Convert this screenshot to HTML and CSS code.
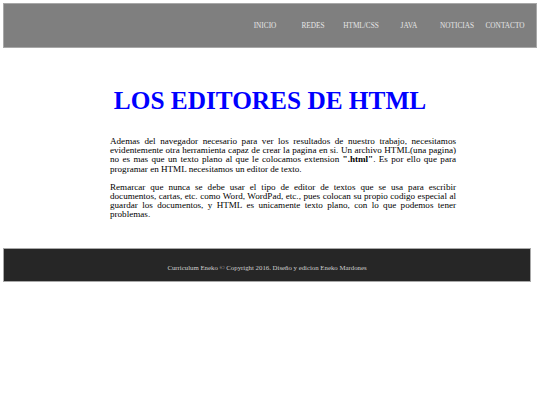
FILE: index.html
```html
<!DOCTYPE html>
<html lang="es">
<head>
<meta charset="utf-8">
<title>Los editores de HTML</title>
<link rel="stylesheet" href="styles.css">
</head>
<body>
<header class="site-header">
  <nav class="nav">
    <a class="nav-item" href="#">INICIO</a>
    <a class="nav-item" href="#">REDES</a>
    <a class="nav-item" href="#">HTML/CSS</a>
    <a class="nav-item" href="#">JAVA</a>
    <a class="nav-item" href="#">NOTICIAS</a>
    <a class="nav-item" href="#">CONTACTO</a>
  </nav>
</header>
<main class="content">
  <h1 class="title">LOS EDITORES DE HTML</h1>
  <div class="text">
    <p>Ademas del navegador necesario para ver los resultados de nuestro trabajo, necesitamos evidentemente otra herramienta capaz de crear la pagina en si. Un archivo HTML(una pagina) no es mas que un texto plano al que le colocamos extension <b>".html"</b>. Es por ello que para programar en HTML necesitamos un editor de texto.</p>
    <p>Remarcar que nunca se debe usar el tipo de editor de textos que se usa para escribir documentos, cartas, etc. como Word, WordPad, etc., pues colocan su propio codigo especial al guardar los documentos, y HTML es unicamente texto plano, con lo que podemos tener problemas.</p>
  </div>
</main>
<footer class="site-footer">
  <p class="footer-text">Curriculum Eneko © Copyright 2016. Diseño y edicion Eneko Mardones</p>
</footer>
</body>
</html>
```

FILE: styles.css
```css
html, body {
  margin: 0;
  padding: 0;
  background: #ffffff;
  font-family: "Liberation Serif", "Times New Roman", serif;
}

body {
  padding-top: 3px;
}

.site-header {
  margin: 0 3px;
  height: 45px;
  box-sizing: border-box;
  background: #7f7f7f;
  border: 1px solid #a8a8a8;
  display: flex;
  align-items: center;
  justify-content: flex-end;
}

.nav {
  display: flex;
  padding-right: 7px;
}

.nav-item {
  width: 48px;
  text-align: center;
  font-size: 7.3px;
  line-height: 8px;
  color: #e6e6e6;
  text-decoration: none;
}

.content {
  padding-top: 38px;
}

.title {
  margin: 0;
  text-align: center;
  font-size: 25.3px;
  line-height: 29px;
  font-weight: bold;
  color: #0000ff;
}

.text {
  width: 346px;
  margin: 22px 0 0 110px;
  font-size: 9.1px;
  line-height: 9.2px;
  color: #000;
  text-align: justify;
}

.text p {
  margin: 0 0 9px;
}

.text p:last-child {
  margin-bottom: 0;
}

.site-footer {
  margin: 28px 9px 0 3px;
  height: 34px;
  box-sizing: border-box;
  background: #262626;
  border: 1px solid #a8a8a8;
  padding-top: 15px;
}

.footer-text {
  margin: 0;
  text-align: center;
  font-size: 6.8px;
  line-height: 8px;
  color: #d0d0d0;
}
```
